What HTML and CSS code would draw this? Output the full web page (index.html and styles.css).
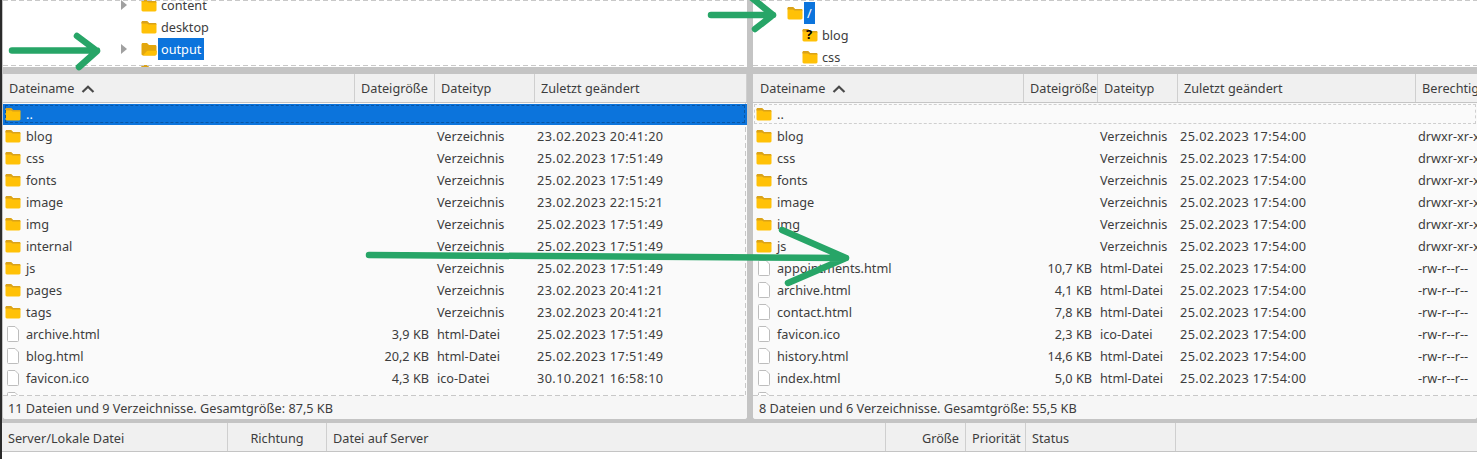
FILE: index.html
```html
<!DOCTYPE html>
<html lang="de">
<head>
    <meta charset="UTF-8">
    <title>FileZilla</title>
    <link rel="stylesheet" href="styles.css">
</head>
<body>
    <svg width="0" height="0" class="defs">
        <symbol id="folder" viewBox="0 0 16 14">
            <path d="M.5 2.500C.5 1.700 1.100 1 1.900 1H6l2 2h6.100c.8 0 1.400.6 1.400 1.400v7.700c0 .8-.6 1.400-1.400 1.400H1.900C1.100 13.500.5 12.900.5 12.100Z" fill="#ffc107"/>
            <path d="M.5 2.500C.5 1.700 1.100 1 1.900 1H6l2 2h6.100c.8 0 1.400.6 1.400 1.400H7.500L6 3.500H.5Z" fill="#d9a21b"/>
        </symbol>
        <symbol id="folder-open" viewBox="0 0 16 14">
            <path d="M.5 2.500C.5 1.700 1.100 1 1.900 1H6l2 2h6.100c.8 0 1.400.6 1.400 1.400v7.700c0 .8-.6 1.400-1.400 1.400H1.900C1.100 13.500.5 12.900.5 12.100Z" fill="#e3a70d"/>
            <path d="M5.500 9.500c.3-.5.8-.8 1.400-.8h9.100l-.5 3.400c-.1.800-.7 1.400-1.500 1.400H1.900Z" fill="#ffc107"/>
        </symbol>
        <symbol id="file" viewBox="0 0 16 16">
            <path d="M2.500 1.500a1 1 0 0 1 1-1h6.500l3.500 3.500v10.500a1 1 0 0 1-1 1h-9a1 1 0 0 1-1-1Z" fill="#fff" stroke="#bdbdbd"/>
        </symbol>
    </svg>

    <div class="shell">
        <div class="split">
            <div class="tree tree-left">
                <div class="tree-scroll">
                    <div class="node"><span class="tri"></span><svg class="ico"><use href="#folder"/></svg><span class="label">content</span></div>
                    <div class="node"><span class="tri none"></span><svg class="ico"><use href="#folder"/></svg><span class="label">desktop</span></div>
                    <div class="node"><span class="tri"></span><svg class="ico"><use href="#folder-open"/></svg><span class="label sel">output</span></div>
                    <div class="node"><span class="tri none"></span><svg class="ico"><use href="#folder"/></svg><span class="label">pages</span></div>
                </div>
            </div>
            <div class="tree tree-right">
                <div class="node root"><svg class="ico"><use href="#folder"/></svg><span class="label sel">/</span></div>
                <div class="node sub"><span class="qfolder"><svg class="ico"><use href="#folder"/></svg><b>?</b></span><span class="label">blog</span></div>
                <div class="node sub"><svg class="ico"><use href="#folder"/></svg><span class="label">css</span></div>
            </div>
        </div>

        <div class="split lists">
            <section class="pane pane-left">
                <div class="row head">
                    <div class="c name">Dateiname <svg class="sort" width="14" height="8" viewBox="0 0 14 8"><path d="M1.500 7 7 1.800 12.500 7" fill="none" stroke="#4a4a4a" stroke-width="2.200"/></svg></div>
                    <div class="c size">Dateigröße</div>
                    <div class="c type">Dateityp</div>
                    <div class="c date">Zuletzt geändert</div>
                </div>
                <div class="rows">
                    <div class="row current"><div class="c name"><svg class="ico"><use href="#folder"/></svg>..</div><div class="c size"></div><div class="c type"></div><div class="c date"></div></div>
                    <div class="row"><div class="c name"><svg class="ico"><use href="#folder"/></svg>blog</div><div class="c size"></div><div class="c type">Verzeichnis</div><div class="c date">23.02.2023 20:41:20</div></div>
                    <div class="row"><div class="c name"><svg class="ico"><use href="#folder"/></svg>css</div><div class="c size"></div><div class="c type">Verzeichnis</div><div class="c date">25.02.2023 17:51:49</div></div>
                    <div class="row"><div class="c name"><svg class="ico"><use href="#folder"/></svg>fonts</div><div class="c size"></div><div class="c type">Verzeichnis</div><div class="c date">25.02.2023 17:51:49</div></div>
                    <div class="row"><div class="c name"><svg class="ico"><use href="#folder"/></svg>image</div><div class="c size"></div><div class="c type">Verzeichnis</div><div class="c date">23.02.2023 22:15:21</div></div>
                    <div class="row"><div class="c name"><svg class="ico"><use href="#folder"/></svg>img</div><div class="c size"></div><div class="c type">Verzeichnis</div><div class="c date">25.02.2023 17:51:49</div></div>
                    <div class="row"><div class="c name"><svg class="ico"><use href="#folder"/></svg>internal</div><div class="c size"></div><div class="c type">Verzeichnis</div><div class="c date">25.02.2023 17:51:49</div></div>
                    <div class="row"><div class="c name"><svg class="ico"><use href="#folder"/></svg>js</div><div class="c size"></div><div class="c type">Verzeichnis</div><div class="c date">25.02.2023 17:51:49</div></div>
                    <div class="row"><div class="c name"><svg class="ico"><use href="#folder"/></svg>pages</div><div class="c size"></div><div class="c type">Verzeichnis</div><div class="c date">23.02.2023 20:41:21</div></div>
                    <div class="row"><div class="c name"><svg class="ico"><use href="#folder"/></svg>tags</div><div class="c size"></div><div class="c type">Verzeichnis</div><div class="c date">23.02.2023 20:41:21</div></div>
                    <div class="row"><div class="c name"><svg class="ico fileico"><use href="#file"/></svg>archive.html</div><div class="c size">3,9 KB</div><div class="c type">html-Datei</div><div class="c date">25.02.2023 17:51:49</div></div>
                    <div class="row"><div class="c name"><svg class="ico fileico"><use href="#file"/></svg>blog.html</div><div class="c size">20,2 KB</div><div class="c type">html-Datei</div><div class="c date">25.02.2023 17:51:49</div></div>
                    <div class="row"><div class="c name"><svg class="ico fileico"><use href="#file"/></svg>favicon.ico</div><div class="c size">4,3 KB</div><div class="c type">ico-Datei</div><div class="c date">30.10.2021 16:58:10</div></div>
                    <div class="row"><div class="c name"><svg class="ico fileico"><use href="#file"/></svg>history.html</div><div class="c size">3,3 KB</div><div class="c type">html-Datei</div><div class="c date">25.02.2023 17:51:49</div></div>
                </div>
                <div class="status">11 Dateien und 9 Verzeichnisse. Gesamtgröße: 87,5 KB</div>
            </section>
            <section class="pane pane-right">
                <div class="row head">
                    <div class="c name">Dateiname <svg class="sort" width="14" height="8" viewBox="0 0 14 8"><path d="M1.500 7 7 1.800 12.500 7" fill="none" stroke="#4a4a4a" stroke-width="2.200"/></svg></div>
                    <div class="c size">Dateigröße</div>
                    <div class="c type">Dateityp</div>
                    <div class="c date">Zuletzt geändert</div>
                    <div class="c perm">Berechtigungen</div>
                </div>
                <div class="rows">
                    <div class="row focus"><div class="c name"><svg class="ico"><use href="#folder"/></svg>..</div><div class="c size"></div><div class="c type"></div><div class="c date"></div><div class="c perm"></div></div>
                    <div class="row"><div class="c name"><svg class="ico"><use href="#folder"/></svg>blog</div><div class="c size"></div><div class="c type">Verzeichnis</div><div class="c date">25.02.2023 17:54:00</div><div class="c perm">drwxr-xr-x</div></div>
                    <div class="row"><div class="c name"><svg class="ico"><use href="#folder"/></svg>css</div><div class="c size"></div><div class="c type">Verzeichnis</div><div class="c date">25.02.2023 17:54:00</div><div class="c perm">drwxr-xr-x</div></div>
                    <div class="row"><div class="c name"><svg class="ico"><use href="#folder"/></svg>fonts</div><div class="c size"></div><div class="c type">Verzeichnis</div><div class="c date">25.02.2023 17:54:00</div><div class="c perm">drwxr-xr-x</div></div>
                    <div class="row"><div class="c name"><svg class="ico"><use href="#folder"/></svg>image</div><div class="c size"></div><div class="c type">Verzeichnis</div><div class="c date">25.02.2023 17:54:00</div><div class="c perm">drwxr-xr-x</div></div>
                    <div class="row"><div class="c name"><svg class="ico"><use href="#folder"/></svg>img</div><div class="c size"></div><div class="c type">Verzeichnis</div><div class="c date">25.02.2023 17:54:00</div><div class="c perm">drwxr-xr-x</div></div>
                    <div class="row"><div class="c name"><svg class="ico"><use href="#folder"/></svg>js</div><div class="c size"></div><div class="c type">Verzeichnis</div><div class="c date">25.02.2023 17:54:00</div><div class="c perm">drwxr-xr-x</div></div>
                    <div class="row"><div class="c name"><svg class="ico fileico"><use href="#file"/></svg>appointments.html</div><div class="c size">10,7 KB</div><div class="c type">html-Datei</div><div class="c date">25.02.2023 17:54:00</div><div class="c perm">-rw-r--r--</div></div>
                    <div class="row"><div class="c name"><svg class="ico fileico"><use href="#file"/></svg>archive.html</div><div class="c size">4,1 KB</div><div class="c type">html-Datei</div><div class="c date">25.02.2023 17:54:00</div><div class="c perm">-rw-r--r--</div></div>
                    <div class="row"><div class="c name"><svg class="ico fileico"><use href="#file"/></svg>contact.html</div><div class="c size">7,8 KB</div><div class="c type">html-Datei</div><div class="c date">25.02.2023 17:54:00</div><div class="c perm">-rw-r--r--</div></div>
                    <div class="row"><div class="c name"><svg class="ico fileico"><use href="#file"/></svg>favicon.ico</div><div class="c size">2,3 KB</div><div class="c type">ico-Datei</div><div class="c date">25.02.2023 17:54:00</div><div class="c perm">-rw-r--r--</div></div>
                    <div class="row"><div class="c name"><svg class="ico fileico"><use href="#file"/></svg>history.html</div><div class="c size">14,6 KB</div><div class="c type">html-Datei</div><div class="c date">25.02.2023 17:54:00</div><div class="c perm">-rw-r--r--</div></div>
                    <div class="row"><div class="c name"><svg class="ico fileico"><use href="#file"/></svg>index.html</div><div class="c size">5,0 KB</div><div class="c type">html-Datei</div><div class="c date">25.02.2023 17:54:00</div><div class="c perm">-rw-r--r--</div></div>
                    <div class="row"><div class="c name"><svg class="ico fileico"><use href="#file"/></svg>portfolio.html</div><div class="c size">7,5 KB</div><div class="c type">html-Datei</div><div class="c date">25.02.2023 17:54:00</div><div class="c perm">-rw-r--r--</div></div>
                </div>
                <div class="status">8 Dateien und 6 Verzeichnisse. Gesamtgröße: 55,5 KB</div>
            </section>
        </div>

        <div class="queue">
            <div class="q q-file">Server/Lokale Datei</div>
            <div class="q q-dir">Richtung</div>
            <div class="q q-remote">Datei auf Server</div>
            <div class="q q-size">Größe</div>
            <div class="q q-prio">Priorität</div>
            <div class="q q-status">Status</div>
            <div class="q q-rest"></div>
        </div>
        <div class="queue-body"></div>
    </div>

    <!-- green arrows painted on top of the screenshot -->
    <svg class="arrows" width="1477" height="459" viewBox="0 0 1477 459">
        <g fill="none" stroke="#27a567" stroke-width="6.500" stroke-linecap="round" stroke-linejoin="round">
            <path d="M12 50.500H97M77 36 97 51 79 67"/>
            <path d="M711 15H773M752 -2 773 15 755 29"/>
            <path d="M369 255 846 258M782 230 846 258 788 283"/>
        </g>
    </svg>
</body>
</html>
```

FILE: styles.css
```css
* {
    box-sizing: border-box;
}
html, body {
    margin: 0;
    height: 100%;
    overflow: hidden;
}
body {
    position: relative;
    background: #fff;
    color: #3d3d3d;
    font-family: "Noto Sans", sans-serif;
    font-size: 12.7px;
}
.defs {
    display: block;
    height: 0;
}
.shell {
    background: #c4c4c4;
    height: 459px;
    border-left: 2px solid #2b2b2b;
    padding-left: 1px;
}

.split {
    display: grid;
    grid-template-columns: 744px 1fr;
    column-gap: 6px;
    height: 67px;
}
.tree {
    position: relative;
    background: #fff;
    overflow: hidden;
    height: 67px;
}
/* long dashes along the top and bottom of the tree */
.tree::before,
.tree::after {
    content: "";
    position: absolute;
    left: 0;
    right: 0;
    height: 1px;
    background: repeating-linear-gradient(90deg, #c8c8c8 0 5px, transparent 5px 8px);
}
.tree::before {
    top: 0;
}
.tree::after {
    bottom: 1px;
}
.tree-scroll {
    margin-top: -6px;
}
.tree-right {
    padding-top: 2px;
}
.node {
    display: flex;
    align-items: center;
    height: 22px;
    padding-left: 118px;
}
.node .ico {
    margin: 0;
}
.tri {
    width: 0;
    height: 0;
    margin-right: 14px;
    border-left: 6px solid #a0a0a0;
    border-top: 5px solid transparent;
    border-bottom: 5px solid transparent;
}
.tri.none {
    border-left-color: transparent;
}
.label {
    margin-left: 1px;
    padding: 0 3px;
    height: 22px;
    line-height: 22px;
}
.sel {
    background: #0c74dc;
    color: #fff;
}
.node.root {
    padding-left: 34px;
}
.node.sub {
    padding-left: 49px;
}
.qfolder {
    position: relative;
    display: block;
    height: 14px;
}
.qfolder b {
    position: absolute;
    left: 4px;
    top: -2px;
    color: #000;
    font-size: 13px;
    line-height: 16px;
}

.lists {
    height: 345px;
    margin-top: 7px;
}
.pane {
    display: flex;
    flex-direction: column;
    background: #fafafa;
    height: 345px;
    min-width: 0;
    overflow: hidden;
    border-radius: 0 0 3px 3px;
}
.rows {
    position: relative;
    height: 293px;
    overflow: hidden;
}
.rows::after {
    content: "";
    position: absolute;
    left: 0;
    right: 0;
    bottom: 0;
    height: 1px;
    background: repeating-linear-gradient(90deg, #c8c8c8 0 5px, #fafafa 5px 8px);
}
.pane-left .rows {
    background: repeating-linear-gradient(#c8c8c8 0 5px, transparent 5px 8px) right 1px top 0 / 1px 100% no-repeat;
}
.row {
    display: grid;
    height: 22px;
    align-items: center;
    white-space: nowrap;
}
.pane-left .row {
    grid-template-columns: 352px 80px 100px 1fr;
}
.pane-right .row {
    grid-template-columns: 271px 74px 80px 238px 1fr;
}
.c {
    padding: 0 2px;
    overflow: hidden;
}
.c.name {
    display: flex;
    align-items: center;
    padding-left: 2px;
}
.pane-right .c.name {
    padding-left: 3px;
}
.c.size {
    text-align: right;
    padding-right: 6px;
}
.rows .c.date {
    letter-spacing: .42px;
}
.ico {
    flex: none;
    width: 16px;
    height: 14px;
    margin-right: 5px;
}
.fileico {
    height: 16px;
}
.row.current {
    background: linear-gradient(#0c74dc, #0c74dc) 0 1px no-repeat;
    color: #fff;
    outline: 1px dashed #0a56a4;
    outline-offset: -3px;
}
.row.focus {
    outline: 1px dashed #cfcfcf;
    outline-offset: -2px;
}

.row.head {
    flex: none;
    height: 29px;
    background: #f0f0f0;
    border-bottom: 1px solid #c4c4c4;
}
.head .c {
    height: 28px;
    line-height: 29px;
    border-right: 1px solid #cfcfcf;
    padding: 0 6px;
    text-align: left;
}
.head .c.name {
    padding: 1px 0 0 6px;
}
.pane-right .head .c.name {
    padding-left: 7px;
}
.head .c.perm {
    border-right: 0;
}
.sort {
    margin-left: 7px;
}
.status {
    flex: none;
    height: 23px;
    line-height: 25px;
    padding-left: 5px;
    background: #f6f6f6;
}
.pane-right .status {
    padding-left: 6px;
}

.queue {
    display: grid;
    grid-template-columns: 226px 99px 559px 80px 60px 150px 1fr;
    height: 29px;
    margin-top: 4px;
    margin-left: -1px;
    background: #f0f0f0;
    border-bottom: 1px solid #c4c4c4;
}
.q {
    height: 28px;
    line-height: 30px;
    padding: 0 6px;
    border-right: 1px solid #cfcfcf;
}
.q-dir {
    text-align: center;
}
.q-size {
    text-align: right;
}
.q-rest {
    border-right: 0;
}
.queue-body {
    height: 10px;
    margin-left: -1px;
    background: #fff;
}

.arrows {
    position: absolute;
    left: 0;
    top: 0;
    pointer-events: none;
}
```
